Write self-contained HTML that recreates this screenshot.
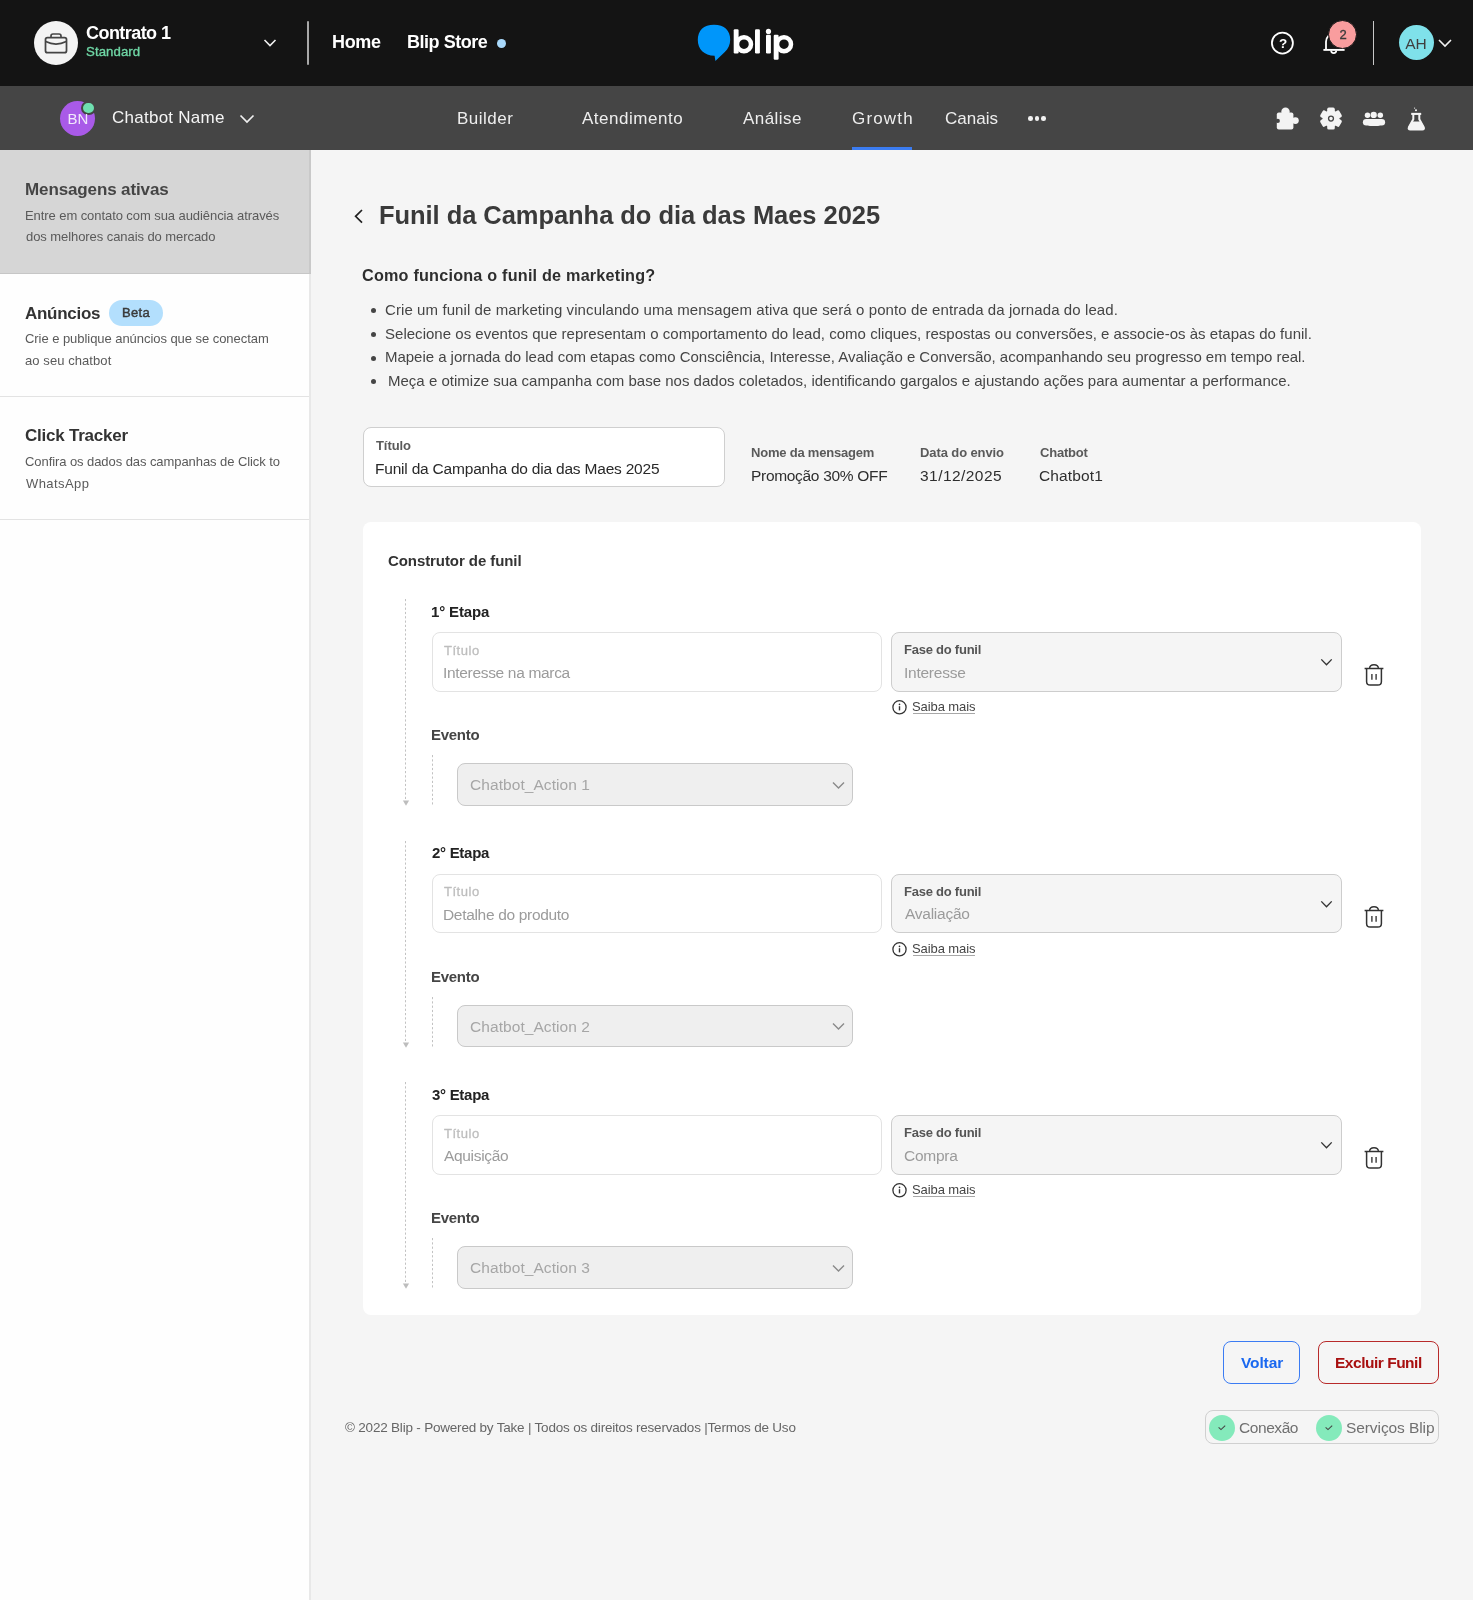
<!DOCTYPE html>
<html><head><meta charset="utf-8"><title>Blip</title>
<style>
html,body{margin:0;padding:0;width:1473px;height:1600px;overflow:hidden;background:#f5f5f5}
body{position:relative;font-family:"Liberation Sans",sans-serif}
div{box-sizing:border-box}
.t{position:absolute;white-space:nowrap;will-change:transform}
</style></head><body>
<div style="position:absolute;left:0px;top:0px;width:1473px;height:86px;background:#141414"></div>
<div style="position:absolute;left:0px;top:86px;width:1473px;height:64px;background:#454545"></div>
<div style="position:absolute;left:0px;top:150px;width:309px;height:1450px;background:#fefefe"></div>
<div style="position:absolute;left:309px;top:150px;width:1.6000000000000227px;height:1450px;background:#e8e8e8"></div>
<div style="position:absolute;left:311px;top:150px;width:1162px;height:1450px;background:#f5f5f5"></div>
<div style="position:absolute;left:34px;top:21px;width:44px;height:44px;border-radius:50%;background:#f4f4f4"></div>
<svg style="position:absolute;left:43px;top:31px" width="26" height="24" viewBox="0 0 26 24">
<path d="M8 6.5 V5 Q8 3 10 3 H16 Q18 3 18 5 V6.5" fill="none" stroke="#454545" stroke-width="1.7"/>
<rect x="2.5" y="6.6" width="21" height="15.1" rx="2" fill="none" stroke="#454545" stroke-width="1.75"/>
<path d="M2.7 10.6 Q13 15.6 23.3 10.6" fill="none" stroke="#454545" stroke-width="1.7"/>
</svg>
<svg style="position:absolute;left:263px;top:38px" width="14" height="10" viewBox="0 0 14 10"><path d="M1.5 2 L7 7.6 L12.5 2" fill="none" stroke="#f0f0f0" stroke-width="1.6"/></svg>
<div style="position:absolute;left:307px;top:21px;width:2px;height:44px;background:#a8a8a8;border-radius:1px"></div>
<div style="position:absolute;left:496.7px;top:38.5px;width:9.6px;height:9.6px;border-radius:50%;background:#a9d9fb"></div>
<svg style="position:absolute;left:690px;top:15px" width="110" height="55" viewBox="690 15 110 55">
<path d="M714 24.7 C724.5 24.7 730.2 30.5 730.2 39.5 C730.2 45 728.2 48.8 724.8 52 L715.4 60.9 L714.6 55.7 C704 55.7 697.8 49 697.8 40 C697.8 30.5 703.5 24.7 714 24.7 Z" fill="#0096fa"/>
<g fill="#ffffff">
<rect x="733.7" y="29.2" width="4.9" height="24.3" rx="1.2"/>
<rect x="755" y="29.2" width="4.9" height="24.3" rx="1.2"/>
<rect x="766" y="34.8" width="4.9" height="18.7" rx="1.2"/>
<circle cx="768.45" cy="31.4" r="2.6"/>
<rect x="773.7" y="34.8" width="4.9" height="25" rx="1.2"/>
</g>
<circle cx="744" cy="44.2" r="7" fill="none" stroke="#fff" stroke-width="4.5"/>
<circle cx="784" cy="44.2" r="7" fill="none" stroke="#fff" stroke-width="4.5"/>
</svg>
<svg style="position:absolute;left:1270px;top:31px" width="25" height="25" viewBox="1270 31 25 25"><circle cx="1282.4" cy="43.05" r="10.5" fill="none" stroke="#fff" stroke-width="1.8"/></svg>
<svg style="position:absolute;left:1320px;top:26px" width="30" height="32" viewBox="0 0 30 32">
<path d="M6 24 V15.8 A8.3 8.3 0 0 1 22.6 15.8 V24" fill="none" stroke="#ffffff" stroke-width="1.8"/>
<path d="M3.4 23.9 H24.6" stroke="#ffffff" stroke-width="1.9"/>
<path d="M11.1 24.6 A2.6 2.6 0 0 0 16.3 24.6" fill="none" stroke="#ffffff" stroke-width="1.7"/>
</svg>
<div style="position:absolute;left:1328.4px;top:19.6px;width:29px;height:29px;border-radius:50%;background:#f99d9e;border:1.5px solid #141414"></div>
<div style="position:absolute;left:1372.7px;top:21px;width:1.5px;height:44px;background:#c8c8c8"></div>
<div style="position:absolute;left:1398.5px;top:25px;width:35px;height:35px;border-radius:50%;background:#7fe1ea"></div>
<svg style="position:absolute;left:1437px;top:37px" width="16" height="12" viewBox="0 0 16 12"><path d="M2 3 L8 9 L14 3" fill="none" stroke="#f0f0f0" stroke-width="1.6"/></svg>
<div style="position:absolute;left:60px;top:101px;width:35px;height:35px;border-radius:50%;background:#a95ae8"></div>
<div style="position:absolute;left:81.2px;top:100.8px;width:14.4px;height:14.4px;border-radius:50%;background:#6fe0b0;border:2px solid #454545"></div>
<svg style="position:absolute;left:238px;top:112px" width="18" height="13" viewBox="0 0 18 13"><path d="M2.5 3.5 L9 10 L15.5 3.5" fill="none" stroke="#f0f0f0" stroke-width="1.7"/></svg>
<div style="position:absolute;left:852px;top:146.5px;width:60px;height:3.5px;background:#3b7cf1"></div>
<div style="position:absolute;left:1028.2px;top:116.2px;width:4.6px;height:4.6px;border-radius:50%;background:#f2f2f2"></div>
<div style="position:absolute;left:1034.7px;top:116.2px;width:4.6px;height:4.6px;border-radius:50%;background:#f2f2f2"></div>
<div style="position:absolute;left:1041.2px;top:116.2px;width:4.6px;height:4.6px;border-radius:50%;background:#f2f2f2"></div>
<svg style="position:absolute;left:1276px;top:107px" width="24" height="24" viewBox="0 0 24 24">
<g fill="#f4f4f4"><rect x="0.8" y="5.5" width="16.6" height="17.1" rx="2"/><circle cx="9.5" cy="4.8" r="4.2"/><circle cx="19.4" cy="13.6" r="3.4"/></g>
<circle cx="1.8" cy="13.9" r="2.1" fill="#454545"/>
</svg>
<svg style="position:absolute;left:1319px;top:107px" width="24" height="24" viewBox="0 0 24 24">
<g fill="#f4f4f4"><circle cx="12" cy="11.6" r="8.4"/><rect x="8.2" y="0.6" width="7.6" height="6" rx="1.6" transform="rotate(0 12 11.6)"/><rect x="8.2" y="0.6" width="7.6" height="6" rx="1.6" transform="rotate(60 12 11.6)"/><rect x="8.2" y="0.6" width="7.6" height="6" rx="1.6" transform="rotate(120 12 11.6)"/><rect x="8.2" y="0.6" width="7.6" height="6" rx="1.6" transform="rotate(180 12 11.6)"/><rect x="8.2" y="0.6" width="7.6" height="6" rx="1.6" transform="rotate(240 12 11.6)"/><rect x="8.2" y="0.6" width="7.6" height="6" rx="1.6" transform="rotate(300 12 11.6)"/></g>
<circle cx="12" cy="11.6" r="2.45" fill="none" stroke="#454545" stroke-width="1.3"/>
</svg>
<svg style="position:absolute;left:1362px;top:110px" width="24" height="18" viewBox="0 0 24 18">
<g fill="#f4f4f4">
<circle cx="5.5" cy="5.2" r="2.75"/><circle cx="18.3" cy="5.2" r="2.75"/><circle cx="11.7" cy="4.9" r="3.15"/>
<rect x="0.9" y="8.9" width="22.2" height="6.6" rx="3.3"/>
<rect x="5.5" y="9.5" width="13" height="6.5" rx="3"/>
</g>
</svg>
<svg style="position:absolute;left:1406px;top:104px" width="22" height="28" viewBox="0 0 22 28">
<circle cx="8.6" cy="4.1" r="0.6" fill="#f4f4f4"/><circle cx="10" cy="6.3" r="1.05" fill="#f4f4f4"/>
<path d="M5.2 9.9 H15.2" stroke="#f4f4f4" stroke-width="2.1"/>
<path d="M7.3 9.9 V15.2 L2.9 23.3 Q2 25.4 4.3 25.4 H16.3 Q18.6 25.4 17.7 23.3 L13.3 15.2 V9.9" fill="none" stroke="#f4f4f4" stroke-width="2"/>
<path d="M5.6 17.5 H15 L18.2 23.3 Q19 25.4 16.5 25.4 H4.1 Q1.6 25.4 2.4 23.3 Z" fill="#f4f4f4"/>
</svg>
<div style="position:absolute;left:0px;top:150px;width:309px;height:123px;background:#d6d6d6"></div>
<div style="position:absolute;left:309px;top:150px;width:1.6000000000000227px;height:123px;background:#c9c9c9"></div>
<div style="position:absolute;left:0px;top:272.5px;width:310.6px;height:1.0px;background:#c6c6c6"></div>
<div style="position:absolute;left:0px;top:396px;width:309px;height:1px;background:#e3e3e3"></div>
<div style="position:absolute;left:0px;top:519px;width:309px;height:1px;background:#e3e3e3"></div>
<div style="position:absolute;left:109px;top:300px;width:53.5px;height:25.6px;border-radius:13px;background:#b3dffd"></div>
<svg style="position:absolute;left:351px;top:206.6px" width="14" height="19" viewBox="0 0 14 19"><path d="M11 3 L4.6 9.3 L11 15.6" fill="none" stroke="#222" stroke-width="1.7"/></svg>
<div style="position:absolute;left:371.3px;top:308.3px;width:5px;height:5px;border-radius:50%;background:#454545"></div>
<div style="position:absolute;left:371.3px;top:332.1px;width:5px;height:5px;border-radius:50%;background:#454545"></div>
<div style="position:absolute;left:371.3px;top:355.5px;width:5px;height:5px;border-radius:50%;background:#454545"></div>
<div style="position:absolute;left:371.3px;top:378.90000000000003px;width:5px;height:5px;border-radius:50%;background:#454545"></div>
<div style="position:absolute;left:362.5px;top:427px;width:362.5px;height:60px;border:1px solid #cfcfcf;border-radius:8px;background:#fff"></div>
<div style="position:absolute;left:362.5px;top:522px;width:1058.5px;height:792.5px;border-radius:8px;background:#ffffff"></div>
<svg style="position:absolute;left:404px;top:599.0px" width="3" height="203"><line x1="1.5" y1="0" x2="1.5" y2="202" stroke="#c2c2c2" stroke-width="1" stroke-dasharray="2.2 2.1"/></svg>
<svg style="position:absolute;left:401.5px;top:800.3px" width="8" height="7" viewBox="0 0 8 7"><path d="M0.9 0.4 H7.1 L4 5.8 Z" fill="#bdbdbd"/></svg>
<div style="position:absolute;left:431.5px;top:632.2px;width:450px;height:59.4px;border:1px solid #e3e3e3;border-radius:8px;background:#fff"></div>
<div style="position:absolute;left:891.2px;top:632.2px;width:450.4px;height:59.4px;border:1px solid #cdcdcd;border-radius:8px;background:#f5f5f5"></div>
<svg style="position:absolute;left:1319px;top:656.0px" width="15" height="12" viewBox="0 0 15 12"><path d="M2.3 3.4 L7.5 8.8 L12.7 3.4" fill="none" stroke="#333" stroke-width="1.35"/></svg>
<svg style="position:absolute;left:891px;top:699.0px" width="17" height="17" viewBox="0 0 17 17"><circle cx="8.5" cy="8.3" r="6.6" fill="none" stroke="#333" stroke-width="1.3"/><rect x="7.8" y="7.2" width="1.4" height="4.2" fill="#333"/><circle cx="8.5" cy="5.3" r="0.85" fill="#333"/></svg>
<div style="position:absolute;left:912.8px;top:713.2px;width:62.200000000000045px;height:1.0px;background:#a8a8a8"></div>
<svg style="position:absolute;left:1362px;top:661.0px" width="24" height="27" viewBox="0 0 24 27">
<path d="M2.6 7.5 H21.4" stroke="#333" stroke-width="1.5"/>
<path d="M7.6 7.5 Q7.6 3.7 12 3.7 Q16.4 3.7 16.4 7.5" fill="none" stroke="#333" stroke-width="1.4"/>
<path d="M4.6 7.5 V20.5 Q4.6 24.1 8.2 24.1 H15.8 Q19.4 24.1 19.4 20.5 V7.5" fill="none" stroke="#333" stroke-width="1.5"/>
<path d="M9.9 13 V18.7 M14.1 13 V18.7" stroke="#333" stroke-width="1.35"/>
</svg>
<svg style="position:absolute;left:431px;top:755.2px" width="3" height="52"><line x1="1.5" y1="0" x2="1.5" y2="51.5" stroke="#c2c2c2" stroke-width="1" stroke-dasharray="2.2 2.1"/></svg>
<div style="position:absolute;left:457.3px;top:763.3px;width:395.3px;height:42.7px;border:1px solid #c9c9c9;border-radius:8px;background:#efefef"></div>
<svg style="position:absolute;left:830.5px;top:778.5px" width="15" height="12" viewBox="0 0 15 12"><path d="M2 3.4 L7.5 9 L13 3.4" fill="none" stroke="#8a8a8a" stroke-width="1.4"/></svg>
<svg style="position:absolute;left:404px;top:840.5px" width="3" height="203"><line x1="1.5" y1="0" x2="1.5" y2="202" stroke="#c2c2c2" stroke-width="1" stroke-dasharray="2.2 2.1"/></svg>
<svg style="position:absolute;left:401.5px;top:1041.8px" width="8" height="7" viewBox="0 0 8 7"><path d="M0.9 0.4 H7.1 L4 5.8 Z" fill="#bdbdbd"/></svg>
<div style="position:absolute;left:431.5px;top:873.7px;width:450px;height:59.4px;border:1px solid #e3e3e3;border-radius:8px;background:#fff"></div>
<div style="position:absolute;left:891.2px;top:873.7px;width:450.4px;height:59.4px;border:1px solid #cdcdcd;border-radius:8px;background:#f5f5f5"></div>
<svg style="position:absolute;left:1319px;top:897.5px" width="15" height="12" viewBox="0 0 15 12"><path d="M2.3 3.4 L7.5 8.8 L12.7 3.4" fill="none" stroke="#333" stroke-width="1.35"/></svg>
<svg style="position:absolute;left:891px;top:940.5px" width="17" height="17" viewBox="0 0 17 17"><circle cx="8.5" cy="8.3" r="6.6" fill="none" stroke="#333" stroke-width="1.3"/><rect x="7.8" y="7.2" width="1.4" height="4.2" fill="#333"/><circle cx="8.5" cy="5.3" r="0.85" fill="#333"/></svg>
<div style="position:absolute;left:912.8px;top:954.7px;width:62.200000000000045px;height:1.0px;background:#a8a8a8"></div>
<svg style="position:absolute;left:1362px;top:902.5px" width="24" height="27" viewBox="0 0 24 27">
<path d="M2.6 7.5 H21.4" stroke="#333" stroke-width="1.5"/>
<path d="M7.6 7.5 Q7.6 3.7 12 3.7 Q16.4 3.7 16.4 7.5" fill="none" stroke="#333" stroke-width="1.4"/>
<path d="M4.6 7.5 V20.5 Q4.6 24.1 8.2 24.1 H15.8 Q19.4 24.1 19.4 20.5 V7.5" fill="none" stroke="#333" stroke-width="1.5"/>
<path d="M9.9 13 V18.7 M14.1 13 V18.7" stroke="#333" stroke-width="1.35"/>
</svg>
<svg style="position:absolute;left:431px;top:996.7px" width="3" height="52"><line x1="1.5" y1="0" x2="1.5" y2="51.5" stroke="#c2c2c2" stroke-width="1" stroke-dasharray="2.2 2.1"/></svg>
<div style="position:absolute;left:457.3px;top:1004.8px;width:395.3px;height:42.7px;border:1px solid #c9c9c9;border-radius:8px;background:#efefef"></div>
<svg style="position:absolute;left:830.5px;top:1020.0px" width="15" height="12" viewBox="0 0 15 12"><path d="M2 3.4 L7.5 9 L13 3.4" fill="none" stroke="#8a8a8a" stroke-width="1.4"/></svg>
<svg style="position:absolute;left:404px;top:1082.0px" width="3" height="203"><line x1="1.5" y1="0" x2="1.5" y2="202" stroke="#c2c2c2" stroke-width="1" stroke-dasharray="2.2 2.1"/></svg>
<svg style="position:absolute;left:401.5px;top:1283.3px" width="8" height="7" viewBox="0 0 8 7"><path d="M0.9 0.4 H7.1 L4 5.8 Z" fill="#bdbdbd"/></svg>
<div style="position:absolute;left:431.5px;top:1115.2px;width:450px;height:59.4px;border:1px solid #e3e3e3;border-radius:8px;background:#fff"></div>
<div style="position:absolute;left:891.2px;top:1115.2px;width:450.4px;height:59.4px;border:1px solid #cdcdcd;border-radius:8px;background:#f5f5f5"></div>
<svg style="position:absolute;left:1319px;top:1139.0px" width="15" height="12" viewBox="0 0 15 12"><path d="M2.3 3.4 L7.5 8.8 L12.7 3.4" fill="none" stroke="#333" stroke-width="1.35"/></svg>
<svg style="position:absolute;left:891px;top:1182.0px" width="17" height="17" viewBox="0 0 17 17"><circle cx="8.5" cy="8.3" r="6.6" fill="none" stroke="#333" stroke-width="1.3"/><rect x="7.8" y="7.2" width="1.4" height="4.2" fill="#333"/><circle cx="8.5" cy="5.3" r="0.85" fill="#333"/></svg>
<div style="position:absolute;left:912.8px;top:1196.2px;width:62.200000000000045px;height:1.0px;background:#a8a8a8"></div>
<svg style="position:absolute;left:1362px;top:1144.0px" width="24" height="27" viewBox="0 0 24 27">
<path d="M2.6 7.5 H21.4" stroke="#333" stroke-width="1.5"/>
<path d="M7.6 7.5 Q7.6 3.7 12 3.7 Q16.4 3.7 16.4 7.5" fill="none" stroke="#333" stroke-width="1.4"/>
<path d="M4.6 7.5 V20.5 Q4.6 24.1 8.2 24.1 H15.8 Q19.4 24.1 19.4 20.5 V7.5" fill="none" stroke="#333" stroke-width="1.5"/>
<path d="M9.9 13 V18.7 M14.1 13 V18.7" stroke="#333" stroke-width="1.35"/>
</svg>
<svg style="position:absolute;left:431px;top:1238.2px" width="3" height="52"><line x1="1.5" y1="0" x2="1.5" y2="51.5" stroke="#c2c2c2" stroke-width="1" stroke-dasharray="2.2 2.1"/></svg>
<div style="position:absolute;left:457.3px;top:1246.3px;width:395.3px;height:42.7px;border:1px solid #c9c9c9;border-radius:8px;background:#efefef"></div>
<svg style="position:absolute;left:830.5px;top:1261.5px" width="15" height="12" viewBox="0 0 15 12"><path d="M2 3.4 L7.5 9 L13 3.4" fill="none" stroke="#8a8a8a" stroke-width="1.4"/></svg>
<div style="position:absolute;left:1223px;top:1341.4px;width:77.4px;height:42.4px;border:1.5px solid #3b7cf3;border-radius:8px"></div>
<div style="position:absolute;left:1317.9px;top:1341.4px;width:120.7px;height:42.4px;border:1.5px solid #b82a2a;border-radius:8px"></div>
<div style="position:absolute;left:1205px;top:1410.3px;width:233.6px;height:34.2px;border:1px solid #d0d0d0;border-radius:8px"></div>
<div style="position:absolute;left:1209px;top:1414.5px;width:26px;height:26px;border-radius:50%;background:#84eabb"></div>
<svg style="position:absolute;left:1216px;top:1421.5px" width="12" height="12" viewBox="0 0 12 12"><path d="M2.6 5.4 L5 7.6 L9.2 3.6" fill="none" stroke="#454545" stroke-width="1.1"/></svg>
<div style="position:absolute;left:1315.5px;top:1414.5px;width:26px;height:26px;border-radius:50%;background:#84eabb"></div>
<svg style="position:absolute;left:1322.5px;top:1421.5px" width="12" height="12" viewBox="0 0 12 12"><path d="M2.6 5.4 L5 7.6 L9.2 3.6" fill="none" stroke="#454545" stroke-width="1.1"/></svg>
<div class="t" id="contrato" style="left:85.60px;top:22.00px;font-size:18px;line-height:22.00px;font-weight:700;color:#ffffff;letter-spacing:-0.556px;">Contrato 1</div>
<div class="t" id="standard" style="left:85.60px;top:44.00px;font-size:13.2px;line-height:16.00px;font-weight:400;color:#6fd6a5;letter-spacing:0.087px;-webkit-text-stroke:0.35px #6fd6a5">Standard</div>
<div class="t" id="home" style="left:332.40px;top:31.00px;font-size:18px;line-height:22.00px;font-weight:700;color:#ffffff;letter-spacing:-0.333px;">Home</div>
<div class="t" id="store" style="left:407.00px;top:31.00px;font-size:18px;line-height:22.00px;font-weight:700;color:#ffffff;letter-spacing:-0.468px;">Blip Store</div>
<div class="t" id="q" style="left:1282.60px;top:36.00px;font-size:13.5px;line-height:16.00px;font-weight:700;color:#ffffff;transform:translateX(-50%);">?</div>
<div class="t" id="badge" style="left:1342.90px;top:27.00px;font-size:13px;line-height:16.00px;font-weight:400;color:#3a3a3a;transform:translateX(-50%);-webkit-text-stroke:0.35px #3a3a3a">2</div>
<div class="t" id="ah" style="left:1416.00px;top:34.00px;font-size:15.5px;line-height:19.00px;font-weight:400;color:#3f3f3f;transform:translateX(-50%);">AH</div>
<div class="t" id="bn" style="left:77.80px;top:110.00px;font-size:15px;line-height:18.00px;font-weight:400;color:#f1e8fb;transform:translateX(-50%);">BN</div>
<div class="t" id="cbname" style="left:111.70px;top:108.00px;font-size:17px;line-height:20.00px;font-weight:400;color:#f5f5f5;letter-spacing:0.253px;">Chatbot Name</div>
<div class="t" id="builder" style="left:456.70px;top:109.00px;font-size:17px;line-height:20.00px;font-weight:400;color:#eeeeee;letter-spacing:0.500px;">Builder</div>
<div class="t" id="atend" style="left:582.00px;top:109.00px;font-size:17px;line-height:20.00px;font-weight:400;color:#eeeeee;letter-spacing:0.520px;">Atendimento</div>
<div class="t" id="analise" style="left:743.00px;top:109.00px;font-size:17px;line-height:20.00px;font-weight:400;color:#eeeeee;letter-spacing:0.432px;">Análise</div>
<div class="t" id="growth" style="left:852.20px;top:109.00px;font-size:17px;line-height:20.00px;font-weight:400;color:#eeeeee;letter-spacing:1.160px;">Growth</div>
<div class="t" id="canais" style="left:945.20px;top:109.00px;font-size:17px;line-height:20.00px;font-weight:400;color:#eeeeee;">Canais</div>
<div class="t" id="sb1t" style="left:25.00px;top:180.00px;font-size:17px;line-height:20.00px;font-weight:700;color:#454545;letter-spacing:-0.119px;">Mensagens ativas</div>
<div class="t" id="sb1d1" style="left:25.00px;top:208.00px;font-size:13px;line-height:16.00px;font-weight:400;color:#5a5a5a;letter-spacing:-0.073px;">Entre em contato com sua audiência através</div>
<div class="t" id="sb1d2" style="left:26.00px;top:229.00px;font-size:13px;line-height:16.00px;font-weight:400;color:#5a5a5a;letter-spacing:-0.069px;">dos melhores canais do mercado</div>
<div class="t" id="sb2t" style="left:25.00px;top:304.00px;font-size:17px;line-height:20.00px;font-weight:700;color:#333333;letter-spacing:-0.286px;">Anúncios</div>
<div class="t" id="beta" style="left:121.70px;top:305.00px;font-size:13px;line-height:16.00px;font-weight:400;color:#3a3a3a;letter-spacing:0.334px;-webkit-text-stroke:0.45px #3a3a3a">Beta</div>
<div class="t" id="sb2d1" style="left:25.00px;top:331.00px;font-size:13px;line-height:16.00px;font-weight:400;color:#5a5a5a;letter-spacing:-0.051px;">Crie e publique anúncios que se conectam</div>
<div class="t" id="sb2d2" style="left:25.00px;top:353.00px;font-size:13px;line-height:16.00px;font-weight:400;color:#5a5a5a;letter-spacing:0.077px;">ao seu chatbot</div>
<div class="t" id="sb3t" style="left:25.00px;top:426.00px;font-size:17px;line-height:20.00px;font-weight:700;color:#333333;letter-spacing:-0.232px;">Click Tracker</div>
<div class="t" id="sb3d1" style="left:25.00px;top:454.00px;font-size:13px;line-height:16.00px;font-weight:400;color:#5a5a5a;letter-spacing:-0.073px;">Confira os dados das campanhas de Click to</div>
<div class="t" id="sb3d2" style="left:26.00px;top:476.00px;font-size:13px;line-height:16.00px;font-weight:400;color:#5a5a5a;letter-spacing:0.429px;">WhatsApp</div>
<div class="t" id="title" style="left:378.70px;top:200.00px;font-size:25.5px;line-height:31.00px;font-weight:700;color:#3a3a3a;letter-spacing:-0.054px;">Funil da Campanha do dia das Maes 2025</div>
<div class="t" id="como" style="left:362.40px;top:266.00px;font-size:16.2px;line-height:19.00px;font-weight:700;color:#2e2e2e;letter-spacing:0.212px;">Como funciona o funil de marketing?</div>
<div class="t" id="b1" style="left:384.50px;top:301.00px;font-size:15px;line-height:18.00px;font-weight:400;color:#454545;letter-spacing:0.088px;">Crie um funil de marketing vinculando uma mensagem ativa que será o ponto de entrada da jornada do lead.</div>
<div class="t" id="b2" style="left:384.50px;top:325.00px;font-size:15px;line-height:18.00px;font-weight:400;color:#454545;letter-spacing:0.023px;">Selecione os eventos que representam o comportamento do lead, como cliques, respostas ou conversões, e associe-os às etapas do funil.</div>
<div class="t" id="b3" style="left:384.50px;top:348.00px;font-size:15px;line-height:18.00px;font-weight:400;color:#454545;letter-spacing:-0.031px;">Mapeie a jornada do lead com etapas como Consciência, Interesse, Avaliação e Conversão, acompanhando seu progresso em tempo real.</div>
<div class="t" id="b4" style="left:388.30px;top:372.00px;font-size:15px;line-height:18.00px;font-weight:400;color:#454545;letter-spacing:0.011px;">Meça e otimize sua campanha com base nos dados coletados, identificando gargalos e ajustando ações para aumentar a performance.</div>
<div class="t" id="ti_l" style="left:375.60px;top:438.00px;font-size:13px;line-height:16.00px;font-weight:700;color:#5a5a5a;letter-spacing:-0.080px;">Título</div>
<div class="t" id="ti_v" style="left:374.60px;top:459.00px;font-size:15.5px;line-height:19.00px;font-weight:400;color:#292929;letter-spacing:-0.204px;">Funil da Campanha do dia das Maes 2025</div>
<div class="t" id="nm_l" style="left:750.60px;top:445.00px;font-size:13px;line-height:16.00px;font-weight:700;color:#5a5a5a;letter-spacing:-0.214px;">Nome da mensagem</div>
<div class="t" id="nm_v" style="left:750.60px;top:466.00px;font-size:15.5px;line-height:19.00px;font-weight:400;color:#2e2e2e;letter-spacing:-0.308px;">Promoção 30% OFF</div>
<div class="t" id="dt_l" style="left:920.40px;top:445.00px;font-size:13px;line-height:16.00px;font-weight:700;color:#5a5a5a;letter-spacing:-0.100px;">Data do envio</div>
<div class="t" id="dt_v" style="left:920.40px;top:466.00px;font-size:15.5px;line-height:19.00px;font-weight:400;color:#2e2e2e;letter-spacing:0.445px;">31/12/2025</div>
<div class="t" id="cb_l" style="left:1040.00px;top:445.00px;font-size:13px;line-height:16.00px;font-weight:700;color:#5a5a5a;letter-spacing:-0.199px;">Chatbot</div>
<div class="t" id="cb_v" style="left:1039.00px;top:466.00px;font-size:15.5px;line-height:19.00px;font-weight:400;color:#2e2e2e;letter-spacing:0.143px;">Chatbot1</div>
<div class="t" id="constr" style="left:387.80px;top:552.00px;font-size:15px;line-height:18.00px;font-weight:700;color:#333333;letter-spacing:-0.078px;">Construtor de funil</div>
<div class="t" id="et0" style="left:431.40px;top:603.00px;font-size:15px;line-height:18.00px;font-weight:700;color:#222222;letter-spacing:-0.143px;">1° Etapa</div>
<div class="t" id="tl0" style="left:444.40px;top:643.00px;font-size:13px;line-height:16.00px;font-weight:400;color:#bdbdbd;letter-spacing:0.520px;-webkit-text-stroke:0.3px #bdbdbd">Título</div>
<div class="t" id="tv0" style="left:443.40px;top:663.00px;font-size:15.5px;line-height:19.00px;font-weight:400;color:#9b9b9b;letter-spacing:-0.320px;">Interesse na marca</div>
<div class="t" id="fl0" style="left:903.50px;top:642.00px;font-size:13px;line-height:16.00px;font-weight:700;color:#555555;letter-spacing:-0.234px;">Fase do funil</div>
<div class="t" id="fv0" style="left:903.50px;top:663.00px;font-size:15.5px;line-height:19.00px;font-weight:400;color:#9b9b9b;letter-spacing:-0.250px;">Interesse</div>
<div class="t" id="sm0" style="left:911.80px;top:699.00px;font-size:13px;line-height:16.00px;font-weight:400;color:#454545;letter-spacing:-0.090px;">Saiba mais</div>
<div class="t" id="ev0" style="left:430.80px;top:726.00px;font-size:15px;line-height:18.00px;font-weight:700;color:#454545;letter-spacing:-0.280px;">Evento</div>
<div class="t" id="es0" style="left:469.80px;top:775.00px;font-size:15.5px;line-height:19.00px;font-weight:400;color:#a6a6a6;letter-spacing:0.067px;">Chatbot_Action 1</div>
<div class="t" id="et1" style="left:432.40px;top:844.00px;font-size:15px;line-height:18.00px;font-weight:700;color:#222222;letter-spacing:-0.286px;">2° Etapa</div>
<div class="t" id="tl1" style="left:444.40px;top:884.00px;font-size:13px;line-height:16.00px;font-weight:400;color:#bdbdbd;letter-spacing:0.520px;-webkit-text-stroke:0.3px #bdbdbd">Título</div>
<div class="t" id="tv1" style="left:443.40px;top:905.00px;font-size:15.5px;line-height:19.00px;font-weight:400;color:#9b9b9b;letter-spacing:-0.320px;">Detalhe do produto</div>
<div class="t" id="fl1" style="left:903.50px;top:884.00px;font-size:13px;line-height:16.00px;font-weight:700;color:#555555;letter-spacing:-0.234px;">Fase do funil</div>
<div class="t" id="fv1" style="left:904.50px;top:904.00px;font-size:15.5px;line-height:19.00px;font-weight:400;color:#9b9b9b;letter-spacing:-0.250px;">Avaliação</div>
<div class="t" id="sm1" style="left:911.80px;top:941.00px;font-size:13px;line-height:16.00px;font-weight:400;color:#454545;letter-spacing:-0.090px;">Saiba mais</div>
<div class="t" id="ev1" style="left:430.80px;top:968.00px;font-size:15px;line-height:18.00px;font-weight:700;color:#454545;letter-spacing:-0.280px;">Evento</div>
<div class="t" id="es1" style="left:469.80px;top:1017.00px;font-size:15.5px;line-height:19.00px;font-weight:400;color:#a6a6a6;letter-spacing:0.067px;">Chatbot_Action 2</div>
<div class="t" id="et2" style="left:432.40px;top:1086.00px;font-size:15px;line-height:18.00px;font-weight:700;color:#222222;letter-spacing:-0.286px;">3° Etapa</div>
<div class="t" id="tl2" style="left:444.40px;top:1126.00px;font-size:13px;line-height:16.00px;font-weight:400;color:#bdbdbd;letter-spacing:0.520px;-webkit-text-stroke:0.3px #bdbdbd">Título</div>
<div class="t" id="tv2" style="left:444.40px;top:1146.00px;font-size:15.5px;line-height:19.00px;font-weight:400;color:#9b9b9b;letter-spacing:-0.320px;">Aquisição</div>
<div class="t" id="fl2" style="left:903.50px;top:1125.00px;font-size:13px;line-height:16.00px;font-weight:700;color:#555555;letter-spacing:-0.234px;">Fase do funil</div>
<div class="t" id="fv2" style="left:903.50px;top:1146.00px;font-size:15.5px;line-height:19.00px;font-weight:400;color:#9b9b9b;letter-spacing:-0.250px;">Compra</div>
<div class="t" id="sm2" style="left:911.80px;top:1182.00px;font-size:13px;line-height:16.00px;font-weight:400;color:#454545;letter-spacing:-0.090px;">Saiba mais</div>
<div class="t" id="ev2" style="left:430.80px;top:1209.00px;font-size:15px;line-height:18.00px;font-weight:700;color:#454545;letter-spacing:-0.280px;">Evento</div>
<div class="t" id="es2" style="left:469.80px;top:1258.00px;font-size:15.5px;line-height:19.00px;font-weight:400;color:#a6a6a6;letter-spacing:0.067px;">Chatbot_Action 3</div>
<div class="t" id="voltar" style="left:1240.60px;top:1353.00px;font-size:15.5px;line-height:19.00px;font-weight:700;color:#1a68f0;letter-spacing:-0.120px;">Voltar</div>
<div class="t" id="excluir" style="left:1334.80px;top:1353.00px;font-size:15.5px;line-height:19.00px;font-weight:700;color:#a81010;letter-spacing:-0.482px;">Excluir Funil</div>
<div class="t" id="footer" style="left:345.00px;top:1420.00px;font-size:13.5px;line-height:16.00px;font-weight:400;color:#666666;letter-spacing:-0.203px;">© 2022 Blip - Powered by Take | Todos os direitos reservados |Termos de Uso</div>
<div class="t" id="st_Con" style="left:1238.80px;top:1418.00px;font-size:15.5px;line-height:19.00px;font-weight:400;color:#707070;letter-spacing:-0.435px;">Conexão</div>
<div class="t" id="st_Ser" style="left:1345.50px;top:1418.00px;font-size:15.5px;line-height:19.00px;font-weight:400;color:#707070;letter-spacing:-0.083px;">Serviços Blip</div>
</body></html>
